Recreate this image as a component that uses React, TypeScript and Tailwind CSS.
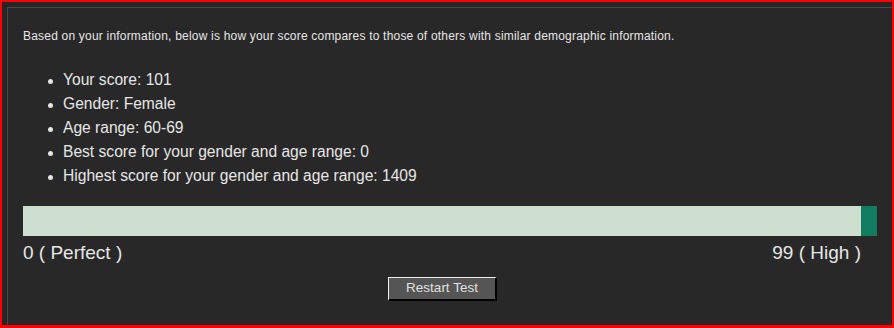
export default function App() {
  const items = [
    "Your score: 101",
    "Gender: Female",
    "Age range: 60-69",
    "Best score for your gender and age range: 0",
    "Highest score for your gender and age range: 1409",
  ];

  return (
    <div
      className="w-[894px] h-[328px] overflow-hidden bg-[#262626] border-t-2 border-l-2 border-r-2 border-b-[3px] border-[#ff0000]"
      style={{ fontFamily: '"Liberation Sans", Arial, sans-serif' }}
    >
      <div className="mt-[5px] ml-[5px] w-[900px] h-[400px] border-t border-l border-[#474747] bg-[#282828] pl-[15px] pt-[21px] text-[#e6e6e6]">
        <p className="text-[12px] leading-[14px] tracking-[0.2px]">
          Based on your information, below is how your score compares to those of others with similar demographic information.
        </p>

        {/* score details */}
        <ul className="mt-[25px] ml-[25px] text-[15.6px] leading-[24px]">
          {items.map((item) => (
            <li key={item} className="flex items-center">
              <span className="w-[5px] h-[5px] rounded-full bg-[#e6e6e6] mr-[10px] mt-[2px]" />
              {item}
            </li>
          ))}
        </ul>

        <div className="mt-[18px] w-[854px] h-[30px] flex">
          <div className="flex-1 bg-[#cddfce]" />
          <div className="w-[16px] bg-[#127c60]" />
        </div>
        <div className="w-[854px] pr-[16px] flex justify-between text-[19px] leading-[22px] mt-[6px]">
          <span>0 ( Perfect )</span>
          <span>99 ( High )</span>
        </div>

        <button className="mt-[13px] ml-[365px] w-[109px] h-[24px] bg-[#555555] border-t border-l border-[#f0f0f0] border-r-2 border-b-2 border-r-black border-b-black text-[13.5px] text-[#e0e0e0]">
          Restart Test
        </button>
      </div>
    </div>
  );
}
